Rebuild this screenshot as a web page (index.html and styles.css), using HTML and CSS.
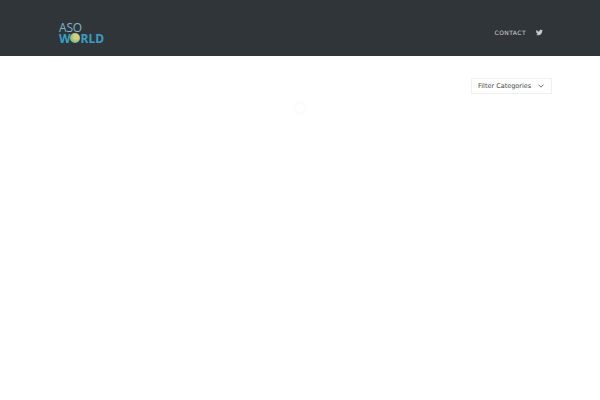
FILE: index.html
```html
<!DOCTYPE html>
<html lang="en">
<head>
<meta charset="utf-8">
<title>ASO World</title>
<link rel="stylesheet" href="styles.css">
</head>
<body>
<header class="top">
  <a class="logo" href="#">
    <span class="logo-aso">ASO</span>
    <span class="logo-world">W<span class="logo-o"></span>RLD</span>
  </a>
  <nav class="nav">
    <a class="nav-link" href="#">CONTACT</a>
    <svg class="tw" viewBox="0 0 24 24" width="7" height="7"><path fill="#c9ccce" d="M23.6 4.6c-.9.4-1.8.7-2.8.8 1-.6 1.8-1.6 2.1-2.7-.9.6-2 1-3.1 1.200C18.900 2.900 17.600 2.300 16.200 2.300c-2.700 0-4.900 2.200-4.900 4.900 0 .4 0 .8.100 1.100C7.300 8.100 3.700 6.100 1.300 3.100.9 3.800.6 4.700.6 5.600c0 1.700.9 3.200 2.200 4.100-.8 0-1.600-.2-2.200-.6v.1c0 2.400 1.700 4.400 3.900 4.800-.4.100-.8.200-1.300.2-.3 0-.6 0-.9-.1.600 2 2.400 3.400 4.600 3.400-1.700 1.300-3.800 2.100-6.100 2.100-.4 0-.8 0-1.200-.1 2.200 1.400 4.800 2.200 7.500 2.200 9.100 0 14-7.500 14-14v-.6c1-.7 1.800-1.600 2.500-2.500z"/></svg>
  </nav>
</header>
<main class="content">
  <div class="filter-row">
    <div class="filter">
      <span class="filter-label">Filter Categories</span>
      <svg class="chev" viewBox="0 0 8 5" width="6" height="4"><path d="M.7.7 4 4l3.300-3.300" fill="none" stroke="#555" stroke-width="1.100"/></svg>
    </div>
  </div>
  <div class="loader"></div>
</main>
</body>
</html>
```
FILE: styles.css
```css
* { box-sizing: border-box; }
html, body { margin: 0; height: 100%; background: #fff; }
body { font-family: "Open Sans", sans-serif; overflow: hidden; }
a { text-decoration: none; }
.top {
  height: 56px;
  background: #30353a;
  display: flex;
  align-items: center;
  justify-content: space-between;
  padding: 9px 57px 0 59px;
}
.logo { display: flex; flex-direction: column; padding-top: 1px; }
.logo-aso {
  font: 400 12px/10px "Open Sans", sans-serif;
  color: #7fb4c8;
  letter-spacing: -.2px;
}
.logo-world {
  font: 700 12px/11px "Open Sans", sans-serif;
  color: #3a9fc4;
  display: flex;
  align-items: center;
}
.logo-o {
  width: 10px;
  height: 10px;
  border-radius: 50%;
  background: radial-gradient(circle at 62% 38%, #d8cf70 0 28%, #8cc08e 60%, #46a5c2);
  margin: 0 .5px 0 -.5px;
}
.nav { display: flex; align-items: center; gap: 10px; }
.nav-link {
  font: 400 6px/10px "DejaVu Sans", sans-serif;
  letter-spacing: .42px;
  color: #d4d6d8;
}
.content { display: flex; flex-direction: column; padding: 22px 48px 0 0; }
.filter-row { display: flex; justify-content: flex-end; }
.filter {
  width: 81px;
  height: 16px;
  border: 1px solid #f0f0f0;
  display: flex;
  align-items: center;
  justify-content: space-between;
  padding: 0 7px 0 6px;
  font: 400 6.5px/10px "DejaVu Sans", sans-serif;
  color: #444;
}
.filter-label { white-space: nowrap; }
.loader {
  width: 12px;
  height: 12px;
  border: 1px solid #f9f9f9;
  border-radius: 50%;
  margin: 8px 0 0 294px;
}
```
